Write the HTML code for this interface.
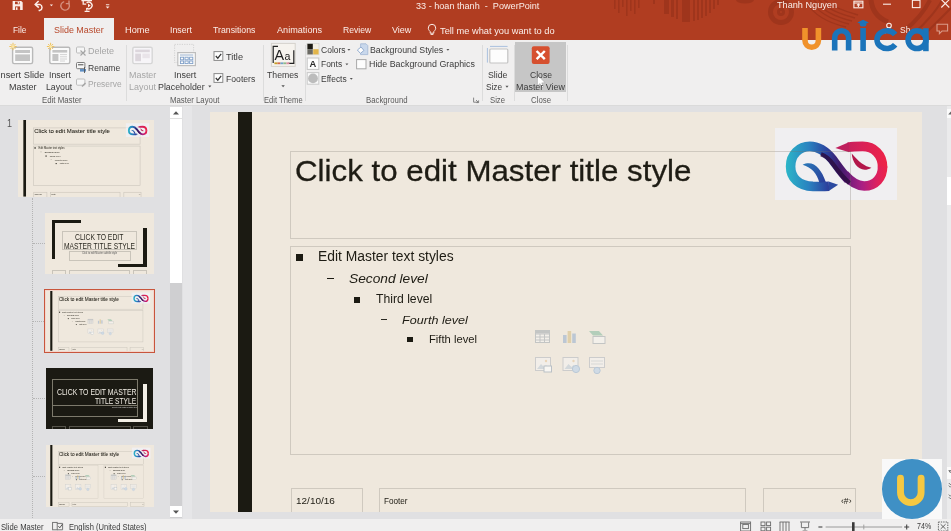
<!DOCTYPE html>
<html lang="en"><head><meta charset="utf-8"><title>33 - hoan thanh - PowerPoint</title>
<style>
html,body{margin:0;padding:0}
body{width:951px;height:531px;overflow:hidden;position:relative;background:#e0e0e2;font-family:"Liberation Sans",sans-serif}
.t{position:absolute;white-space:nowrap;line-height:1;transform-origin:0 0;display:block}
.a{position:absolute}
svg{position:absolute;overflow:visible}
.ph{position:absolute;border:1px solid #cfc9bf;box-sizing:border-box}
.sep{position:absolute;width:1px;top:45px;height:56px;background:#dcdcdc}
.cb{position:absolute;box-sizing:border-box;border:1px solid #8a8a8a;background:#fdfdfd}
.th{position:absolute;overflow:hidden;background:#efe8dd}
.sc{position:absolute;left:0;top:0;width:712.5px;height:401px;transform-origin:0 0}
.dk .ph{border-color:#7d7a6c}
.mini .ph{border-width:3.6px;border-color:#c9c4ba}
#all{position:absolute;left:0;top:0;width:951px;height:531px;overflow:hidden;will-change:transform}
</style></head><body><div id="all">

<svg width="0" height="0" style="left:0;top:0">
<defs>
<linearGradient id="lgA" x1="130" y1="0" x2="540" y2="0" gradientUnits="userSpaceOnUse">
<stop offset="0" stop-color="#2bb6c8"/><stop offset=".35" stop-color="#2a82c0"/><stop offset=".62" stop-color="#2b45a0"/><stop offset=".82" stop-color="#3f1a6a"/><stop offset="1" stop-color="#6d1b7c"/>
</linearGradient>
<linearGradient id="lgB" x1="496" y1="0" x2="765" y2="0" gradientUnits="userSpaceOnUse">
<stop offset="0" stop-color="#651a78"/><stop offset=".4" stop-color="#a81f84"/><stop offset=".75" stop-color="#dc2060"/><stop offset="1" stop-color="#ee2346"/>
</linearGradient>
<linearGradient id="lgC" x1="440" y1="0" x2="765" y2="0" gradientUnits="userSpaceOnUse">
<stop offset="0" stop-color="#b81e5e"/><stop offset=".5" stop-color="#d82058"/><stop offset="1" stop-color="#ee2346"/>
</linearGradient>
<linearGradient id="lgD" x1="235" y1="280" x2="380" y2="390" gradientUnits="userSpaceOnUse">
<stop offset="0" stop-color="#2a78b8"/><stop offset="1" stop-color="#2a3c98"/>
</linearGradient>
</defs>
<symbol id="logo" viewBox="0 0 875 531">
<path d="M735,296 C735,215 680,165 610,165 C570,165 545,166 518,171" fill="none" stroke="url(#lgC)" stroke-width="60"/>
<path d="M524,139 L440,175 L526,201 Z" fill="#bf1f5d"/>
<path d="M496,340 C535,385 570,412 620,412 C690,412 735,360 735,290" fill="none" stroke="url(#lgB)" stroke-width="60"/>
<path d="M400,414 C360,416 330,415 300,415 C210,413 160,360 160,290 C160,215 215,165 280,165 C340,165 385,200 425,250 C455,290 480,330 522,372" fill="none" stroke="url(#lgA)" stroke-width="60"/>
<path d="M398,384 L457,405 L398,444 Z" fill="#2b49a0"/>
<path d="M350,214 C385,225 405,248 425,275 C450,310 480,350 528,394" fill="none" stroke="#2d0d42" stroke-width="27" opacity=".85"/>
<path d="M235,280 C300,248 350,300 380,388 L340,392 C325,335 292,297 235,280Z" fill="url(#lgD)"/>
<path d="M542,210 C546,278 600,338 665,298 C625,294 582,258 542,210Z" fill="#b3174a"/>
</symbol>
</svg>










<!-- ============ TITLE BAR + TABS ============ -->
<div class="a" style="left:0;top:0;width:951px;height:40.8px;background:#b03d21"></div>
<svg width="951" height="40" style="left:0;top:0" viewBox="0 0 951 40">
<g fill="#9f351c">
<rect x="614" y="0" width="1.6" height="9"/><rect x="618" y="0" width="1.6" height="13"/><rect x="622" y="0" width="1.6" height="7"/><rect x="626" y="0" width="1.6" height="16"/><rect x="630" y="0" width="1.6" height="11"/><rect x="634" y="0" width="1.6" height="14"/><rect x="638" y="0" width="1.6" height="8"/>
<rect x="653" y="0" width="2" height="4"/><rect x="664" y="0" width="5" height="14"/><rect x="671" y="0" width="3" height="17"/><rect x="676" y="0" width="2" height="19"/><rect x="682" y="0" width="8" height="22"/><rect x="693" y="0" width="2" height="21"/><rect x="697" y="0" width="2" height="20"/><rect x="701" y="0" width="2" height="18"/><rect x="705" y="0" width="2" height="16"/><rect x="709" y="0" width="2" height="13"/><rect x="713" y="0" width="2" height="9"/><rect x="717" y="0" width="2" height="5"/>
<path d="M736,0 a9,3.5 0 0 0 18,0z"/>
</g>
<g fill="none" stroke="#9f351c">
<circle cx="781" cy="12" r="10.5" stroke-width="5"/><circle cx="781" cy="12" r="2.5" stroke-width="3"/>
<path d="M806,2 C812,12 824,22 846,27 M810,0 C816,10 828,19 849,24 M814,0 C820,8 832,16 852,21 M819,0 C824,6 836,13 855,18 M824,0 C829,4 840,10 858,15" stroke-width="1.3"/>
<path d="M871,0 C872,10 878,18 888,22" stroke-width="5"/>
<path d="M905,30 C915,22 925,10 930,0" stroke-width="4"/><path d="M913,34 C925,24 937,10 942,0" stroke-width="2"/><path d="M921,38 L951,8" stroke-width="2"/>
</g>
</svg>
<div class="a" style="left:44.1px;top:18.2px;width:70px;height:23px;background:#f0efef"></div>


<!-- quick access toolbar -->
<svg width="120" height="14" viewBox="0 0 120 14" style="left:0;top:0">
<g fill="#fbeee9">
<path d="M12.6,1 h8.6 l1.5,1.5 v7.4 h-10.1z"/>
</g>
<rect x="15" y="1.6" width="4.6" height="2.6" fill="#b03d21"/><rect x="17.7" y="1.6" width="1.3" height="2.1" fill="#fbeee9"/>
<rect x="15.1" y="6.4" width="5" height="3.5" fill="#b03d21"/><rect x="16" y="7.3" width="1.5" height="2.6" fill="#fbeee9"/>
<g fill="none" stroke="#fbeee9" stroke-width="1.5">
<path d="M38.6,1 L35.2,4.4 L38.8,7.6"/><path d="M35.6,4.4 h4.2 a3.4,3.2 0 0 1 0,6 l-1.2,0.2" />
</g>
<path d="M49.8,4.4 h3.2 l-1.6,1.8z" fill="#fbeee9"/>
<g fill="none" stroke="#d58f7d" stroke-width="1.4">
<path d="M68.4,3 A4.3,4.3 0 1 1 64.2,1.6"/><path d="M69,0.4 v3.2 h-3.2"/>
</g>
<g fill="none" stroke="#fbeee9" stroke-width="1.3">
<path d="M81.4,0.6 h10.6"/><path d="M83.2,1 v3.2 h3"/><path d="M86.6,3 a3.3,3.3 0 1 1 0,5"/><path d="M86.8,8 v2.4 M84.6,11.3 h5"/>
</g>
<path d="M88,3.6 l2.6,1.9 -2.6,1.9z" fill="#fbeee9"/>
<path d="M105.7,6.6 h3.8 l-1.9,2z" fill="#fbeee9"/><rect x="105.9" y="4.3" width="3.4" height=".9" fill="#fbeee9"/>
</svg>
<!-- window controls -->
<svg width="110" height="12" viewBox="845 0 110 12" style="left:845px;top:0">
<g fill="none" stroke="#fbeee9" stroke-width="1.1">
<rect x="853.9" y="1.2" width="9" height="6.6"/><path d="M853.9,3 h9"/><path d="M858.4,4 v3 M856.9,5.3 l1.5,-1.4 1.5,1.4"/>
<path d="M883,4.2 h8"/>
<rect x="912.4" y="0.3" width="7.6" height="7.3"/>
<path d="M941.3,-0.5 l8,8 M949.3,-0.5 l-8,8"/>
</g>
</svg>
<!-- tell me bulb, share, comment -->
<svg width="30" height="16" viewBox="425 22 30 16" style="left:425px;top:22px">
<g fill="none" stroke="#fbeee9" stroke-width="1">
<path d="M430.2,31.6 c-1.6,-1.6 -1.9,-2.6 -1.9,-3.6 a3.7,3.7 0 0 1 7.4,0 c0,1 -.3,2 -1.9,3.6 v1.6 h-3.6z"/><path d="M430.6,34.4 h2.8"/>
</g></svg>
<svg width="70" height="16" viewBox="885 20 70 16" style="left:885px;top:20px">
<g fill="none" stroke="#fbeee9" stroke-width="1.1">
<circle cx="889" cy="25.6" r="2.3"/><path d="M885,33.5 a4,4.4 0 0 1 8,0"/>
<path d="M937,24.2 h10.6 v6.8 h-5.6 l-2.6,2.6 v-2.6 h-2.4z" stroke="#d99a88"/>
</g></svg>

<!-- ============ RIBBON ============ -->
<div class="a" style="left:0;top:40px;width:951px;height:65px;background:#f0efef"></div>
<div class="a" style="left:0;top:104.5px;width:951px;height:1px;background:#dadada"></div>
<div class="sep" style="left:126px"></div>
<div class="sep" style="left:262.5px"></div>
<div class="sep" style="left:304.5px"></div>
<div class="sep" style="left:482px"></div>
<div class="sep" style="left:513.8px"></div>
<div class="sep" style="left:567px"></div>
<div class="a" style="left:515.2px;top:42px;width:51px;height:50px;background:#c6c6c6"></div>


<!-- ribbon icons -->
<svg width="600" height="65" viewBox="0 40 600 65" style="left:0;top:40px">
<!-- insert slide master -->
<rect x="12.6" y="47.2" width="20" height="16.4" rx="1.5" fill="#fafafa" stroke="#b9b9b9" stroke-width="1.4"/>
<rect x="15.2" y="50" width="14.8" height="3" fill="#c4c4c4"/><rect x="15.2" y="54.4" width="14.8" height="6.6" fill="#c4c4c4"/>
<g stroke="#efbe4e" stroke-width=".9" fill="none"><path d="M13.0,42.8 v7.4 M9.3,46.5 h7.4 M10.5,44.0 l5,5 M15.5,44.0 l-5,5"/></g><circle cx="13.0" cy="46.5" r="1.5" fill="#fbe6a8"/>
<!-- insert layout -->
<rect x="49.8" y="47.2" width="20" height="16.4" rx="1.5" fill="#fafafa" stroke="#b9b9b9" stroke-width="1.4"/>
<rect x="52.4" y="50" width="14.8" height="2.6" fill="#c4c4c4"/><rect x="52.4" y="54" width="6" height="7" fill="#c4c4c4"/>
<path d="M60,54.6 h7 M60,56.8 h7 M60,59 h7 M60,61 h5" stroke="#cfcfcf" stroke-width=".9"/>
<g stroke="#efbe4e" stroke-width=".9" fill="none"><path d="M50.6,42.8 v7.4 M46.9,46.5 h7.4 M48.1,44.0 l5,5 M53.1,44.0 l-5,5"/></g><circle cx="50.6" cy="46.5" r="1.5" fill="#fbe6a8"/>
<!-- delete / rename / preserve small icons -->
<g fill="#f6f6f6" stroke="#bdbdbd" stroke-width="1"><rect x="76.5" y="47" width="8" height="6" rx="1"/></g>
<path d="M80.5,50.5 l5,5 M85.5,50.5 l-5,5" stroke="#a5a5a5" stroke-width="1.1"/>
<g fill="#f6f6f6" stroke="#7d7d7d" stroke-width="1"><rect x="76.5" y="62.5" width="8.4" height="6.2" rx="1"/></g>
<rect x="78" y="64" width="5.4" height="1.4" fill="#7d7d7d"/><rect x="80" y="69" width="6" height="2.6" fill="#5f8fc4"/><path d="M84.5,67 v6" stroke="#555" stroke-width=".9"/>
<g fill="#f6f6f6" stroke="#bdbdbd" stroke-width="1"><rect x="76.5" y="79" width="8.4" height="6.2" rx="1"/></g>
<path d="M82,86.5 l3.5,-3.5" stroke="#a5a5a5" stroke-width="1.5"/>
<!-- master layout (disabled) -->
<rect x="132.8" y="47.2" width="19.4" height="16.4" rx="1.5" fill="#f7f5f8" stroke="#d6d6d6" stroke-width="1.4"/>
<rect x="135.2" y="49.6" width="14.6" height="2.6" fill="#dcd6dc"/><rect x="135.2" y="53.6" width="5.8" height="7.6" fill="#dcd6dc"/><rect x="142.4" y="53.6" width="7.4" height="4.6" fill="#e9e4e9"/>
<!-- insert placeholder -->
<rect x="174.6" y="44.4" width="19" height="18" fill="none" stroke="#c9c9c9" stroke-width=".8" stroke-dasharray="1.2,1.2"/>
<rect x="177.8" y="52.6" width="17.6" height="13" fill="#fbfbfb" stroke="#bdbdbd" stroke-width="1.2"/>
<path d="M180,55 h13.2" stroke="#9eb4d0" stroke-width="1"/>
<g fill="none" stroke="#7f9fc8" stroke-width=".9"><rect x="180.4" y="57.2" width="3.2" height="2.6"/><rect x="185" y="57.2" width="3.2" height="2.6"/><rect x="189.6" y="57.2" width="3.2" height="2.6"/><rect x="180.4" y="61" width="3.2" height="2.6"/><rect x="185" y="61" width="3.2" height="2.6"/><rect x="189.6" y="61" width="3.2" height="2.6"/></g>
<path d="M208.2,85.6 h3.2 l-1.6,1.9z" fill="#555"/>
<!-- checkboxes -->
<rect x="214" y="51.6" width="8.8" height="8.8" fill="#fdfdfd" stroke="#8a8a8a" stroke-width="1"/><path d="M215.8,56 l2,2.2 3.4,-4.4" fill="none" stroke="#333" stroke-width="1.2"/>
<rect x="214" y="73.6" width="8.8" height="8.8" fill="#fdfdfd" stroke="#8a8a8a" stroke-width="1"/><path d="M215.8,78 l2,2.2 3.4,-4.4" fill="none" stroke="#333" stroke-width="1.2"/>
<!-- themes -->
<rect x="271.4" y="43.4" width="23.8" height="23" fill="#f6f3ee" stroke="#d5d2cc" stroke-width="1"/>
<path d="M278,46.4 h-4.8 v16.6 M293.8,50.2 v13.2 h-5.6" fill="none" stroke="#222" stroke-width="1.2"/>
<text x="274.6" y="59.6" font-family="Liberation Sans, sans-serif" font-size="14.4" fill="#1e1e1e">A</text><text x="284.4" y="59.6" font-family="Liberation Sans, sans-serif" font-size="10.6" fill="#1e1e1e">a</text>
<g><rect x="274.4" y="62.4" width="3" height="1.8" fill="#c9a227"/><rect x="277.4" y="62.4" width="3" height="1.8" fill="#d46a4a"/><rect x="280.4" y="62.4" width="3" height="1.8" fill="#6fa0c8"/><rect x="283.4" y="62.4" width="3" height="1.8" fill="#8fb98a"/><rect x="286.4" y="62.4" width="3" height="1.8" fill="#d98aa0"/></g>
<path d="M281.4,85.2 h3.4 l-1.7,2z" fill="#555"/>
<!-- colors / fonts / effects -->
<rect x="307" y="43.4" width="12" height="11.4" fill="#f4f0e6" stroke="#cfcfcf" stroke-width=".6"/>
<rect x="307.4" y="43.8" width="5.4" height="5.4" fill="#1c1a14"/><rect x="307.4" y="49.2" width="5.4" height="5.2" fill="#6b6a64"/><rect x="313.2" y="49.2" width="5.4" height="5.2" fill="#e2b54a"/>
<rect x="307.2" y="58" width="11.6" height="11.4" fill="#fdfdfd" stroke="#c4c4c4" stroke-width="1"/>
<text x="309.6" y="67.4" font-family="Liberation Sans, sans-serif" font-size="9.4" font-weight="bold" fill="#2b2b2b">A</text>
<rect x="307.2" y="72.6" width="11.6" height="11.6" fill="#f9f9f9" stroke="#c9c9c9" stroke-width="1"/><circle cx="313" cy="78.4" r="4.9" fill="#bcbcbc"/>
<path d="M347.4,49 h3 l-1.5,1.8z M345.4,63.4 h3 l-1.5,1.8z M349.8,78 h3 l-1.5,1.8z M446.4,49 h3 l-1.5,1.8z" fill="#555"/>
<!-- background styles -->
<path d="M360.6,43.8 h5.4 l1.8,1.8 v9 h-7.2z" fill="#c9d8ec" stroke="#9fb6d4" stroke-width=".8"/>
<path d="M357.4,50 l3.6,-3 3,3.4 -3.6,3z" fill="#fdfdfd" stroke="#8aa6cc" stroke-width=".9"/>
<rect x="356.6" y="59.6" width="9.4" height="9.2" fill="#fdfdfd" stroke="#a9a9a9" stroke-width="1"/>
<path d="M473.6,97.6 v4.6 h4.6 M476,100 l2.4,2.4 M478.6,100.4 v2.2 h-2.2" fill="none" stroke="#7a7a7a" stroke-width=".9"/>
<!-- slide size -->
<path d="M487.4,48 v14.6 M490,46.4 h17.6" stroke="#a9c0de" stroke-width="1"/>
<rect x="489.8" y="49" width="18" height="14" rx="1" fill="#fdfdfd" stroke="#c4c4c4" stroke-width="1.2"/>
<path d="M505.4,85.8 h3.2 l-1.6,1.9z" fill="#555"/>
<!-- close master view -->
<rect x="531.8" y="46.2" width="17.8" height="17.8" rx="2" fill="#d6502f"/>
<path d="M536.6,51 l8.2,8.2 M544.8,51 l-8.2,8.2" stroke="#fff" stroke-width="2.4"/>
<!-- mouse cursor -->
<path d="M537.4,75 v11 l2.6,-2.4 1.8,4 1.8,-.8 -1.8,-3.9 3.4,-.2z" fill="#fff" stroke="#999" stroke-width=".5"/>
</svg>


<!-- ============ LEFT PANE ============ -->
<div class="a" style="left:183px;top:105.5px;width:8.5px;height:413px;background:#e6e6e8"></div>
<div class="a" style="left:32px;top:198px;width:0;height:320px;border-left:1px dotted #b4b4b4"></div>
<div class="a" style="left:33px;top:242.5px;width:12px;height:0;border-top:1px dotted #b4b4b4"></div>
<div class="a" style="left:33px;top:320.5px;width:11px;height:0;border-top:1px dotted #b4b4b4"></div>
<div class="a" style="left:33px;top:398px;width:12px;height:0;border-top:1px dotted #b4b4b4"></div>
<div class="a" style="left:33px;top:475.5px;width:12px;height:0;border-top:1px dotted #b4b4b4"></div>

<!-- thumb 1 : master -->
<div class="th" style="left:18px;top:120px;width:136px;height:77.4px">
<div class="sc mini" style="transform:scale(.1909)">
<div class="a" style="left:28px;top:0;width:14.1px;height:401px;background:#1b1a12"></div>
<div class="ph" style="left:80.2px;top:40.4px;width:561px;height:87.3px"></div>
<div class="a" style="left:564.6px;top:17.3px;width:122.9px;height:71.4px;background:#f0eff1"></div>
<div class="a" style="left:555px;top:9px;width:140px;height:85px"><svg width="140" height="85" viewBox="0 0 875 531" style="left:0;top:0"><use href="#logo"/></svg></div>
<div class="a" style="left:564.6px;top:40.4px;width:76px;height:1px;background:rgba(120,110,100,.28)"></div>
<div class="a" style="left:640.2px;top:40.4px;width:1px;height:48.3px;background:rgba(120,110,100,.28)"></div>
<div class="ph" style="left:80.7px;top:377.3px;width:72.2px;height:30px"></div>
<div class="ph" style="left:169px;top:377.3px;width:366.8px;height:30px"></div>
<div class="ph" style="left:553.3px;top:377.3px;width:93.2px;height:30px"></div>
<div class="ph" style="left:80.2px;top:134.5px;width:561px;height:209px"></div>
<div class="a" style="left:86.3px;top:142.8px;width:7.2px;height:7px;background:#1b1a12"></div>
<div class="a" style="left:117.4px;top:167.1px;width:6.3px;height:1.2px;background:#1b1a12"></div>
<div class="a" style="left:143.7px;top:186px;width:6.6px;height:6.4px;background:#1b1a12"></div>
<div class="a" style="left:170.9px;top:208.2px;width:5.8px;height:1.1px;background:#2b2a22"></div>
<div class="a" style="left:197.3px;top:225.8px;width:5.7px;height:5.6px;background:#1b1a12"></div>
<span class="t" style="left:85.20px;top:45.44px;font-size:30.20px;color:#1e1c14;-webkit-text-stroke:.3px #1e1c14;transform:scaleX(1.0363);">Click to edit Master title style</span>
<span class="t" style="left:86.40px;top:386.09px;font-size:8.40px;color:#1e1c14;transform:scaleX(1.1929);">12/10/16</span>
<span class="t" style="left:174.40px;top:386.09px;font-size:8.40px;color:#1e1c14;transform:scaleX(0.9745);">Footer</span>
<span class="t" style="left:631.50px;top:386.09px;font-size:8.40px;color:#1e1c14;transform:scaleX(1.0244);">‹#›</span>
<span class="t" style="left:108.40px;top:138.52px;font-size:13.80px;color:#1e1c14;transform:scaleX(1.0048);">Edit Master text styles</span>
<span class="t" style="left:138.90px;top:161.13px;font-size:13.20px;color:#1e1c14;font-style:italic;transform:scaleX(1.0435);">Second level</span>
<span class="t" style="left:166.20px;top:181.80px;font-size:12.40px;color:#1e1c14;transform:scaleX(0.9833);">Third level</span>
<span class="t" style="left:192.50px;top:203.00px;font-size:11.70px;color:#1e1c14;font-style:italic;transform:scaleX(1.0773);">Fourth level</span>
<span class="t" style="left:219.20px;top:222.52px;font-size:11.20px;color:#1e1c14;transform:scaleX(1.0026);">Fifth level</span>
</div></div>

<!-- thumb 2 : title layout -->
<div class="th" style="left:45px;top:213px;width:108.5px;height:61px">
<div class="a" style="left:7.3px;top:7px;width:3.2px;height:39px;background:#1b1a12"></div>
<div class="a" style="left:7.3px;top:7px;width:28.7px;height:3px;background:#1b1a12"></div>
<div class="a" style="left:98px;top:15.4px;width:3.5px;height:38.6px;background:#1b1a12"></div>
<div class="a" style="left:73px;top:51px;width:28.5px;height:3px;background:#1b1a12"></div>
<div class="ph" style="left:17.3px;top:18.4px;width:74.7px;height:19px;border-width:.7px;border-color:#c9c4ba"></div>
<div class="ph" style="left:24px;top:38px;width:62px;height:10px;border-width:.7px;border-color:#c9c4ba"></div>
<div class="ph" style="left:7.4px;top:57.4px;width:13.6px;height:6px;border-width:.7px;border-color:#c9c4ba"></div>
<div class="ph" style="left:23.6px;top:57.4px;width:61.6px;height:6px;border-width:.7px;border-color:#c9c4ba"></div>
<div class="ph" style="left:87.6px;top:57.4px;width:14.8px;height:6px;border-width:.7px;border-color:#c9c4ba"></div>
<span class="t" style="left:30.00px;top:20.09px;font-size:8.30px;color:#2a2820;transform:scaleX(0.8163);">CLICK TO EDIT</span>
<span class="t" style="left:19.00px;top:28.79px;font-size:8.30px;color:#2a2820;transform:scaleX(0.8064);">MASTER TITLE STYLE</span>
<span class="t" style="left:37.00px;top:40.44px;font-size:2.60px;color:#555;transform:scaleX(0.9447);">Click to edit Master subtitle style</span>
</div>

<!-- thumb 3 : title and content (selected) -->
<div class="th" style="left:45.6px;top:290.4px;width:108px;height:61px">
<div class="sc mini" style="transform:scale(.1516)">
<div class="a" style="left:28px;top:0;width:14.1px;height:401px;background:#1b1a12"></div>
<div class="ph" style="left:80.2px;top:40.4px;width:561px;height:87.3px"></div>
<div class="a" style="left:564.6px;top:17.3px;width:122.9px;height:71.4px;background:#f0eff1"></div>
<div class="a" style="left:555px;top:9px;width:140px;height:85px"><svg width="140" height="85" viewBox="0 0 875 531" style="left:0;top:0"><use href="#logo"/></svg></div>
<div class="a" style="left:564.6px;top:40.4px;width:76px;height:1px;background:rgba(120,110,100,.28)"></div>
<div class="a" style="left:640.2px;top:40.4px;width:1px;height:48.3px;background:rgba(120,110,100,.28)"></div>
<div class="ph" style="left:80.7px;top:377.3px;width:72.2px;height:30px"></div>
<div class="ph" style="left:169px;top:377.3px;width:366.8px;height:30px"></div>
<div class="ph" style="left:553.3px;top:377.3px;width:93.2px;height:30px"></div>
<div class="ph" style="left:80.2px;top:134.5px;width:561px;height:209px"></div>
<div class="a" style="left:86.3px;top:142.8px;width:7.2px;height:7px;background:#1b1a12"></div>
<div class="a" style="left:117.4px;top:167.1px;width:6.3px;height:1.2px;background:#1b1a12"></div>
<div class="a" style="left:143.7px;top:186px;width:6.6px;height:6.4px;background:#1b1a12"></div>
<div class="a" style="left:170.9px;top:208.2px;width:5.8px;height:1.1px;background:#2b2a22"></div>
<div class="a" style="left:197.3px;top:225.8px;width:5.7px;height:5.6px;background:#1b1a12"></div>
<span class="t" style="left:85.20px;top:45.44px;font-size:30.20px;color:#1e1c14;-webkit-text-stroke:.3px #1e1c14;transform:scaleX(1.0363);">Click to edit Master title style</span>
<span class="t" style="left:86.40px;top:386.09px;font-size:8.40px;color:#1e1c14;transform:scaleX(1.1929);">12/10/16</span>
<span class="t" style="left:174.40px;top:386.09px;font-size:8.40px;color:#1e1c14;transform:scaleX(0.9745);">Footer</span>
<span class="t" style="left:631.50px;top:386.09px;font-size:8.40px;color:#1e1c14;transform:scaleX(1.0244);">‹#›</span>
<span class="t" style="left:108.40px;top:138.52px;font-size:13.80px;color:#1e1c14;transform:scaleX(1.0048);">Edit Master text styles</span>
<span class="t" style="left:138.90px;top:161.13px;font-size:13.20px;color:#1e1c14;font-style:italic;transform:scaleX(1.0435);">Second level</span>
<span class="t" style="left:166.20px;top:181.80px;font-size:12.40px;color:#1e1c14;transform:scaleX(0.9833);">Third level</span>
<span class="t" style="left:192.50px;top:203.00px;font-size:11.70px;color:#1e1c14;font-style:italic;transform:scaleX(1.0773);">Fourth level</span>
<span class="t" style="left:219.20px;top:222.52px;font-size:11.20px;color:#1e1c14;transform:scaleX(1.0026);">Fifth level</span>
<div class="a" style="left:0;top:0;width:712.5px;height:401px;transform:scale(2.4);transform-origin:360.5px 239px"><svg width="75" height="46" viewBox="0 0 75 46" style="left:323.4px;top:216.6px;opacity:.62">
<g fill="none" stroke="#a9b0b6" stroke-width="1">
<rect x="2.5" y="2.5" width="14" height="12" fill="#f7f6f3"/><path d="M2.5,6 h14 M2.5,9 h14 M2.5,12 h14 M7,6 v8.5 M11.5,6 v8.5"/>
</g>
<rect x="2.5" y="2.5" width="14" height="3" fill="#a9b0b6"/>
<rect x="30" y="7" width="3.6" height="8" fill="#9db3cf"/><rect x="34.6" y="3" width="3.6" height="12" fill="#d8c08a"/><rect x="39.2" y="5.5" width="3.6" height="9.5" fill="#9db3cf"/>
<path d="M56,3 h10 l4,4.5 h-10z" fill="#8fbfa5"/><rect x="60" y="8.5" width="12" height="7" fill="#f7f6f3" stroke="#a9b0b6"/>
<g fill="#f4f3f1" stroke="#b7bcc2" stroke-width="1">
<rect x="2.5" y="29.5" width="15" height="13"/><rect x="30" y="29.5" width="15" height="13"/><rect x="56.5" y="29.5" width="15" height="10"/>
</g>
<path d="M4,41 l4,-5 3,3 2,-2 3,4z" fill="#c3cfdb"/><circle cx="13" cy="33" r="1.2" fill="#e7c9a0"/>
<path d="M31.5,41 l4,-5 3,3 2,-2 3,4z" fill="#c3cfdb"/><circle cx="40.5" cy="33" r="1.2" fill="#e7c9a0"/>
<rect x="11" y="38" width="7.5" height="6" fill="#fff" stroke="#9aa9b8"/>
<circle cx="43" cy="41" r="3.6" fill="#bcd3ea" stroke="#9ab5d2"/>
<path d="M58,33 h12 M58,36 h12" stroke="#c9cdd2"/><circle cx="64" cy="42.5" r="3.2" fill="#bcd3ea" stroke="#9ab5d2"/>
</svg></div>
</div></div>
<div class="a" style="left:44.2px;top:289px;width:110.8px;height:64px;box-sizing:border-box;border:1.4px solid #c8553c;box-shadow:inset 0 0 0 1px #f3d6cc"></div>

<!-- thumb 4 : dark section header -->
<div class="th dk" style="left:45.6px;top:368.4px;width:107.6px;height:60.6px;background:#1b1a13">
<div class="a" style="left:97.4px;top:15.2px;width:3.6px;height:38.8px;background:#f3efe6"></div>
<div class="a" style="left:72px;top:50.6px;width:29px;height:3.4px;background:#f3efe6"></div>
<div class="ph" style="left:6.8px;top:11px;width:85.6px;height:26.6px;border-width:.6px"></div>
<div class="ph" style="left:6.8px;top:37px;width:85.6px;height:11.2px;border-width:.6px"></div>
<div class="ph" style="left:6.8px;top:57.4px;width:14px;height:6px;border-width:.6px;border-color:#55534a"></div>
<div class="ph" style="left:23.2px;top:57.4px;width:62px;height:6px;border-width:.6px;border-color:#55534a"></div>
<div class="ph" style="left:87.4px;top:57.4px;width:15px;height:6px;border-width:.6px;border-color:#55534a"></div>
<span class="t" style="left:11.30px;top:19.22px;font-size:8.70px;color:#f3efe6;transform:scaleX(0.7917);">CLICK TO EDIT MASTER</span>
<span class="t" style="left:49.60px;top:28.52px;font-size:8.70px;color:#f3efe6;transform:scaleX(0.7687);">TITLE STYLE</span>
<span class="t" style="left:66.00px;top:38.73px;font-size:2.40px;color:#ddd;transform:scaleX(0.7319);">Click to edit Master subtitle style</span>
</div>

<!-- thumb 5 : two content -->
<div class="th" style="left:45.6px;top:445px;width:108.4px;height:62px">
<div class="sc mini" style="transform:scale(.1521)">
<div class="a" style="left:28px;top:0;width:14.1px;height:401px;background:#1b1a12"></div>
<div class="ph" style="left:80.2px;top:40.4px;width:561px;height:87.3px"></div>
<div class="a" style="left:564.6px;top:17.3px;width:122.9px;height:71.4px;background:#f0eff1"></div>
<div class="a" style="left:555px;top:9px;width:140px;height:85px"><svg width="140" height="85" viewBox="0 0 875 531" style="left:0;top:0"><use href="#logo"/></svg></div>
<div class="a" style="left:564.6px;top:40.4px;width:76px;height:1px;background:rgba(120,110,100,.28)"></div>
<div class="a" style="left:640.2px;top:40.4px;width:1px;height:48.3px;background:rgba(120,110,100,.28)"></div>
<div class="ph" style="left:80.7px;top:377.3px;width:72.2px;height:30px"></div>
<div class="ph" style="left:169px;top:377.3px;width:366.8px;height:30px"></div>
<div class="ph" style="left:553.3px;top:377.3px;width:93.2px;height:30px"></div>
<div class="ph" style="left:79px;top:136px;width:264px;height:216px;border-width:2px"></div>
<div class="ph" style="left:380px;top:136px;width:262px;height:216px;border-width:2px"></div>
<span class="t" style="left:85.20px;top:45.44px;font-size:30.20px;color:#1e1c14;-webkit-text-stroke:.3px #1e1c14;transform:scaleX(1.0363);">Click to edit Master title style</span>
<span class="t" style="left:86.40px;top:386.09px;font-size:8.40px;color:#1e1c14;transform:scaleX(1.1929);">12/10/16</span>
<span class="t" style="left:174.40px;top:386.09px;font-size:8.40px;color:#1e1c14;transform:scaleX(0.9745);">Footer</span>
<span class="t" style="left:631.50px;top:386.09px;font-size:8.40px;color:#1e1c14;transform:scaleX(1.0244);">‹#›</span>
<div class="a" style="left:0;top:0;width:343px;height:352px;overflow:hidden"><div class="a" style="left:86.3px;top:142.8px;width:7.2px;height:7px;background:#1b1a12"></div>
<div class="a" style="left:117.4px;top:167.1px;width:6.3px;height:1.2px;background:#1b1a12"></div>
<div class="a" style="left:143.7px;top:186px;width:6.6px;height:6.4px;background:#1b1a12"></div>
<div class="a" style="left:170.9px;top:208.2px;width:5.8px;height:1.1px;background:#2b2a22"></div>
<div class="a" style="left:197.3px;top:225.8px;width:5.7px;height:5.6px;background:#1b1a12"></div><span class="t" style="left:108.40px;top:138.52px;font-size:13.80px;color:#1e1c14;transform:scaleX(1.0048);">Edit Master text styles</span>
<span class="t" style="left:138.90px;top:161.13px;font-size:13.20px;color:#1e1c14;font-style:italic;transform:scaleX(1.0435);">Second level</span>
<span class="t" style="left:166.20px;top:181.80px;font-size:12.40px;color:#1e1c14;transform:scaleX(0.9833);">Third level</span>
<span class="t" style="left:192.50px;top:203.00px;font-size:11.70px;color:#1e1c14;font-style:italic;transform:scaleX(1.0773);">Fourth level</span>
<span class="t" style="left:219.20px;top:222.52px;font-size:11.20px;color:#1e1c14;transform:scaleX(1.0026);">Fifth level</span></div>
<div class="a" style="left:301px;top:0;width:341px;height:352px;overflow:hidden"><div class="a" style="left:86.3px;top:142.8px;width:7.2px;height:7px;background:#1b1a12"></div>
<div class="a" style="left:117.4px;top:167.1px;width:6.3px;height:1.2px;background:#1b1a12"></div>
<div class="a" style="left:143.7px;top:186px;width:6.6px;height:6.4px;background:#1b1a12"></div>
<div class="a" style="left:170.9px;top:208.2px;width:5.8px;height:1.1px;background:#2b2a22"></div>
<div class="a" style="left:197.3px;top:225.8px;width:5.7px;height:5.6px;background:#1b1a12"></div><span class="t" style="left:108.40px;top:138.52px;font-size:13.80px;color:#1e1c14;transform:scaleX(1.0048);">Edit Master text styles</span>
<span class="t" style="left:138.90px;top:161.13px;font-size:13.20px;color:#1e1c14;font-style:italic;transform:scaleX(1.0435);">Second level</span>
<span class="t" style="left:166.20px;top:181.80px;font-size:12.40px;color:#1e1c14;transform:scaleX(0.9833);">Third level</span>
<span class="t" style="left:192.50px;top:203.00px;font-size:11.70px;color:#1e1c14;font-style:italic;transform:scaleX(1.0773);">Fourth level</span>
<span class="t" style="left:219.20px;top:222.52px;font-size:11.20px;color:#1e1c14;transform:scaleX(1.0026);">Fifth level</span></div>
<div class="a" style="left:-149.5px;top:4px;width:712.5px;height:401px;transform:scale(2.4);transform-origin:360.5px 239px"><svg width="75" height="46" viewBox="0 0 75 46" style="left:323.4px;top:216.6px;opacity:.62">
<g fill="none" stroke="#a9b0b6" stroke-width="1">
<rect x="2.5" y="2.5" width="14" height="12" fill="#f7f6f3"/><path d="M2.5,6 h14 M2.5,9 h14 M2.5,12 h14 M7,6 v8.5 M11.5,6 v8.5"/>
</g>
<rect x="2.5" y="2.5" width="14" height="3" fill="#a9b0b6"/>
<rect x="30" y="7" width="3.6" height="8" fill="#9db3cf"/><rect x="34.6" y="3" width="3.6" height="12" fill="#d8c08a"/><rect x="39.2" y="5.5" width="3.6" height="9.5" fill="#9db3cf"/>
<path d="M56,3 h10 l4,4.5 h-10z" fill="#8fbfa5"/><rect x="60" y="8.5" width="12" height="7" fill="#f7f6f3" stroke="#a9b0b6"/>
<g fill="#f4f3f1" stroke="#b7bcc2" stroke-width="1">
<rect x="2.5" y="29.5" width="15" height="13"/><rect x="30" y="29.5" width="15" height="13"/><rect x="56.5" y="29.5" width="15" height="10"/>
</g>
<path d="M4,41 l4,-5 3,3 2,-2 3,4z" fill="#c3cfdb"/><circle cx="13" cy="33" r="1.2" fill="#e7c9a0"/>
<path d="M31.5,41 l4,-5 3,3 2,-2 3,4z" fill="#c3cfdb"/><circle cx="40.5" cy="33" r="1.2" fill="#e7c9a0"/>
<rect x="11" y="38" width="7.5" height="6" fill="#fff" stroke="#9aa9b8"/>
<circle cx="43" cy="41" r="3.6" fill="#bcd3ea" stroke="#9ab5d2"/>
<path d="M58,33 h12 M58,36 h12" stroke="#c9cdd2"/><circle cx="64" cy="42.5" r="3.2" fill="#bcd3ea" stroke="#9ab5d2"/>
</svg></div>
<div class="a" style="left:150.5px;top:4px;width:712.5px;height:401px;transform:scale(2.4);transform-origin:360.5px 239px"><svg width="75" height="46" viewBox="0 0 75 46" style="left:323.4px;top:216.6px;opacity:.62">
<g fill="none" stroke="#a9b0b6" stroke-width="1">
<rect x="2.5" y="2.5" width="14" height="12" fill="#f7f6f3"/><path d="M2.5,6 h14 M2.5,9 h14 M2.5,12 h14 M7,6 v8.5 M11.5,6 v8.5"/>
</g>
<rect x="2.5" y="2.5" width="14" height="3" fill="#a9b0b6"/>
<rect x="30" y="7" width="3.6" height="8" fill="#9db3cf"/><rect x="34.6" y="3" width="3.6" height="12" fill="#d8c08a"/><rect x="39.2" y="5.5" width="3.6" height="9.5" fill="#9db3cf"/>
<path d="M56,3 h10 l4,4.5 h-10z" fill="#8fbfa5"/><rect x="60" y="8.5" width="12" height="7" fill="#f7f6f3" stroke="#a9b0b6"/>
<g fill="#f4f3f1" stroke="#b7bcc2" stroke-width="1">
<rect x="2.5" y="29.5" width="15" height="13"/><rect x="30" y="29.5" width="15" height="13"/><rect x="56.5" y="29.5" width="15" height="10"/>
</g>
<path d="M4,41 l4,-5 3,3 2,-2 3,4z" fill="#c3cfdb"/><circle cx="13" cy="33" r="1.2" fill="#e7c9a0"/>
<path d="M31.5,41 l4,-5 3,3 2,-2 3,4z" fill="#c3cfdb"/><circle cx="40.5" cy="33" r="1.2" fill="#e7c9a0"/>
<rect x="11" y="38" width="7.5" height="6" fill="#fff" stroke="#9aa9b8"/>
<circle cx="43" cy="41" r="3.6" fill="#bcd3ea" stroke="#9ab5d2"/>
<path d="M58,33 h12 M58,36 h12" stroke="#c9cdd2"/><circle cx="64" cy="42.5" r="3.2" fill="#bcd3ea" stroke="#9ab5d2"/>
</svg></div>
</div></div>


<!-- scrollbar -->
<div class="a" style="left:170px;top:106.5px;width:12px;height:411px;background:#cfcfd1"></div>
<div class="a" style="left:170px;top:106.5px;width:12px;height:176.5px;background:#fff"></div>
<div class="a" style="left:170px;top:117.8px;width:12px;height:1px;background:#e0e0e0"></div>
<div class="a" style="left:170px;top:505.6px;width:12px;height:11.6px;background:#fff"></div>
<svg width="12" height="12" style="left:170px;top:106.5px" viewBox="0 0 12 12"><path d="M3,7.5 L6,4.3 L9,7.5Z" fill="#555"/></svg>
<svg width="12" height="12" style="left:170px;top:505.6px" viewBox="0 0 12 12"><path d="M3,4.5 L6,7.7 L9,4.5Z" fill="#555"/></svg>

<!-- ============ MAIN SLIDE ============ -->
<div class="th" id="slide" style="left:209.6px;top:111.8px;width:712.7px;height:400.2px">
<div class="sc" style="left:.4px;top:-.8px">
<div class="a" style="left:28px;top:0;width:14.1px;height:401px;background:#1b1a12"></div>
<div class="ph" style="left:80.2px;top:40.4px;width:561px;height:87.3px"></div>
<div class="a" style="left:564.6px;top:17.3px;width:122.9px;height:71.4px;background:#f0eff1"></div>
<div class="a" style="left:555px;top:9px;width:140px;height:85px"><svg width="140" height="85" viewBox="0 0 875 531" style="left:0;top:0"><use href="#logo"/></svg></div>
<div class="a" style="left:564.6px;top:40.4px;width:76px;height:1px;background:rgba(120,110,100,.28)"></div>
<div class="a" style="left:640.2px;top:40.4px;width:1px;height:48.3px;background:rgba(120,110,100,.28)"></div>
<div class="ph" style="left:80.7px;top:377.3px;width:72.2px;height:30px"></div>
<div class="ph" style="left:169px;top:377.3px;width:366.8px;height:30px"></div>
<div class="ph" style="left:553.3px;top:377.3px;width:93.2px;height:30px"></div>
<div class="ph" style="left:80.2px;top:134.5px;width:561px;height:209px"></div>
<div class="a" style="left:86.3px;top:142.8px;width:7.2px;height:7px;background:#1b1a12"></div>
<div class="a" style="left:117.4px;top:167.1px;width:6.3px;height:1.2px;background:#1b1a12"></div>
<div class="a" style="left:143.7px;top:186px;width:6.6px;height:6.4px;background:#1b1a12"></div>
<div class="a" style="left:170.9px;top:208.2px;width:5.8px;height:1.1px;background:#2b2a22"></div>
<div class="a" style="left:197.3px;top:225.8px;width:5.7px;height:5.6px;background:#1b1a12"></div>
<span class="t" style="left:85.20px;top:45.44px;font-size:30.20px;color:#1e1c14;-webkit-text-stroke:.3px #1e1c14;transform:scaleX(1.0363);">Click to edit Master title style</span>
<span class="t" style="left:108.40px;top:138.52px;font-size:13.80px;color:#1e1c14;transform:scaleX(1.0048);">Edit Master text styles</span>
<span class="t" style="left:138.90px;top:161.13px;font-size:13.20px;color:#1e1c14;font-style:italic;transform:scaleX(1.0435);">Second level</span>
<span class="t" style="left:166.20px;top:181.80px;font-size:12.40px;color:#1e1c14;transform:scaleX(0.9833);">Third level</span>
<span class="t" style="left:192.50px;top:203.00px;font-size:11.70px;color:#1e1c14;font-style:italic;transform:scaleX(1.0773);">Fourth level</span>
<span class="t" style="left:219.20px;top:222.52px;font-size:11.20px;color:#1e1c14;transform:scaleX(1.0026);">Fifth level</span>
<span class="t" style="left:86.40px;top:386.09px;font-size:8.40px;color:#1e1c14;transform:scaleX(1.1929);">12/10/16</span>
<span class="t" style="left:174.40px;top:386.09px;font-size:8.40px;color:#1e1c14;transform:scaleX(0.9745);">Footer</span>
<span class="t" style="left:631.50px;top:386.09px;font-size:8.40px;color:#1e1c14;transform:scaleX(1.0244);">‹#›</span>
<svg width="75" height="46" viewBox="0 0 75 46" style="left:323.4px;top:216.6px;opacity:.62">
<g fill="none" stroke="#a9b0b6" stroke-width="1">
<rect x="2.5" y="2.5" width="14" height="12" fill="#f7f6f3"/><path d="M2.5,6 h14 M2.5,9 h14 M2.5,12 h14 M7,6 v8.5 M11.5,6 v8.5"/>
</g>
<rect x="2.5" y="2.5" width="14" height="3" fill="#a9b0b6"/>
<rect x="30" y="7" width="3.6" height="8" fill="#9db3cf"/><rect x="34.6" y="3" width="3.6" height="12" fill="#d8c08a"/><rect x="39.2" y="5.5" width="3.6" height="9.5" fill="#9db3cf"/>
<path d="M56,3 h10 l4,4.5 h-10z" fill="#8fbfa5"/><rect x="60" y="8.5" width="12" height="7" fill="#f7f6f3" stroke="#a9b0b6"/>
<g fill="#f4f3f1" stroke="#b7bcc2" stroke-width="1">
<rect x="2.5" y="29.5" width="15" height="13"/><rect x="30" y="29.5" width="15" height="13"/><rect x="56.5" y="29.5" width="15" height="10"/>
</g>
<path d="M4,41 l4,-5 3,3 2,-2 3,4z" fill="#c3cfdb"/><circle cx="13" cy="33" r="1.2" fill="#e7c9a0"/>
<path d="M31.5,41 l4,-5 3,3 2,-2 3,4z" fill="#c3cfdb"/><circle cx="40.5" cy="33" r="1.2" fill="#e7c9a0"/>
<rect x="11" y="38" width="7.5" height="6" fill="#fff" stroke="#9aa9b8"/>
<circle cx="43" cy="41" r="3.6" fill="#bcd3ea" stroke="#9ab5d2"/>
<path d="M58,33 h12 M58,36 h12" stroke="#c9cdd2"/><circle cx="64" cy="42.5" r="3.2" fill="#bcd3ea" stroke="#9ab5d2"/>
</svg>
</div>
</div>
<!-- right scrollbar bits -->
<div class="a" style="left:946.8px;top:105.5px;width:5px;height:413px;background:#ebebec"></div>
<div class="a" style="left:946.8px;top:177.4px;width:5px;height:27.6px;background:#fff"></div>
<div class="a" style="left:946.8px;top:108.5px;width:5px;height:9px;background:#fbfbfb"></div>
<div class="a" style="left:946.8px;top:466.6px;width:5px;height:12px;background:#fbfbfb"></div>
<svg width="5" height="60" viewBox="946.8 105 5 60" style="left:946.8px;top:105px"><path d="M948,114.4 l2.6,-2.8 2.6,2.8z" fill="#666"/></svg>
<svg width="5" height="40" viewBox="946.8 465 5 40" style="left:946.8px;top:465px"><path d="M948.6,470.6 h3 l-1.5,2z M948.6,483 l1.6,1.6 1.6,-1.6 M948.6,485.6 l1.6,1.6 1.6,-1.6 M948.6,494.6 l1.6,1.6 1.6,-1.6 M948.6,497.2 l1.6,1.6 1.6,-1.6" fill="none" stroke="#555" stroke-width=".8"/></svg>

<!-- ============ STATUS BAR ============ -->
<div class="a" style="left:0;top:518.7px;width:951px;height:13px;background:#f0efef"></div>

<svg width="951" height="13" viewBox="0 518 951 13" style="left:0;top:518px">
<g fill="none" stroke="#6a6a6a" stroke-width=".9">
<rect x="52.6" y="522.4" width="4.6" height="7.4"/><path d="M57.2,523.4 h5.4 v6.4 h-5.4"/><path d="M58.4,526.2 l1.4,1.6 2.6,-3.6" stroke="#444"/>
<rect x="740.6" y="522" width="10" height="9" /><rect x="742.8" y="524.4" width="5.6" height="4.2"/><path d="M740.6,523.6 h10"/>
<rect x="761" y="522" width="4" height="3.6"/><rect x="766.6" y="522" width="4" height="3.6"/><rect x="761" y="527.2" width="4" height="3.6"/><rect x="766.6" y="527.2" width="4" height="3.6"/>
<path d="M780,522 v9 M783,522 v9 M786,522 v9 M789,522 v9 M779.6,522 h10"/>
<path d="M800,522 h10 M801.4,522.4 v5.2 h7.2 v-5.2 M805,527.6 v2.6 M802.6,531 h4.8"/>
</g>
<path d="M825.6,527 h76.6" stroke="#9a9a9a" stroke-width="1"/><path d="M863.8,524.6 v4.8" stroke="#9a9a9a" stroke-width=".9"/>
<rect x="852" y="522.2" width="2.6" height="9.6" fill="#3a3a3a"/>
<path d="M818.4,527 h4" stroke="#444" stroke-width="1.1"/><path d="M904.2,527 h5 M906.7,524.5 v5" stroke="#444" stroke-width="1.1"/>
<g fill="none" stroke="#555" stroke-width=".9"><rect x="938.4" y="522" width="9.4" height="9" stroke-dasharray="1.4,1"/><path d="M940.6,524.2 l5,4.8 M945.6,524.2 l-5,4.8"/></g>
</svg>


<span class="t" style="left:416.10px;top:2.07px;font-size:8.80px;color:#fbeee9;white-space:pre;transform:scaleX(1.0341);">33 - hoan thanh  -  PowerPoint</span>
<span class="t" style="left:776.50px;top:1.27px;font-size:8.80px;color:#fbeee9;transform:scaleX(1.0395);">Thanh Nguyen</span>
<span class="t" style="left:12.60px;top:26.18px;font-size:9.00px;color:#fbeee9;transform:scaleX(0.9231);">File</span>
<span class="t" style="left:53.80px;top:26.18px;font-size:9.00px;color:#b7472a;transform:scaleX(0.9934);">Slide Master</span>
<span class="t" style="left:124.50px;top:26.18px;font-size:9.00px;color:#fbeee9;transform:scaleX(1.0202);">Home</span>
<span class="t" style="left:170.20px;top:26.18px;font-size:9.00px;color:#fbeee9;transform:scaleX(0.9727);">Insert</span>
<span class="t" style="left:213.10px;top:26.18px;font-size:9.00px;color:#fbeee9;transform:scaleX(0.9705);">Transitions</span>
<span class="t" style="left:277.00px;top:26.18px;font-size:9.00px;color:#fbeee9;transform:scaleX(1.0128);">Animations</span>
<span class="t" style="left:343.00px;top:26.18px;font-size:9.00px;color:#fbeee9;transform:scaleX(0.9588);">Review</span>
<span class="t" style="left:392.10px;top:26.18px;font-size:9.00px;color:#fbeee9;transform:scaleX(1.0021);">View</span>
<span class="t" style="left:440.00px;top:26.58px;font-size:9.00px;color:#fbeee9;transform:scaleX(1.0319);">Tell me what you want to do</span>
<span class="t" style="left:899.60px;top:26.18px;font-size:9.00px;color:#fbeee9;transform:scaleX(0.9441);">Sh</span>
<span class="t" style="left:-2.50px;top:70.63px;font-size:8.90px;color:#3b3b3b;transform:scaleX(1.0426);">Insert Slide</span>
<span class="t" style="left:8.50px;top:82.63px;font-size:8.90px;color:#3b3b3b;transform:scaleX(1.0138);">Master</span>
<span class="t" style="left:48.60px;top:70.63px;font-size:8.90px;color:#3b3b3b;transform:scaleX(0.9863);">Insert</span>
<span class="t" style="left:46.30px;top:82.63px;font-size:8.90px;color:#3b3b3b;transform:scaleX(0.9866);">Layout</span>
<span class="t" style="left:88.20px;top:47.43px;font-size:8.90px;color:#a6a6a6;transform:scaleX(1.0173);">Delete</span>
<span class="t" style="left:88.20px;top:63.73px;font-size:8.90px;color:#3b3b3b;transform:scaleX(0.9599);">Rename</span>
<span class="t" style="left:88.20px;top:79.63px;font-size:8.90px;color:#a6a6a6;transform:scaleX(0.9461);">Preserve</span>
<span class="t" style="left:41.80px;top:97.24px;font-size:8.20px;color:#5a5a5a;transform:scaleX(0.9588);">Edit Master</span>
<span class="t" style="left:128.90px;top:70.63px;font-size:8.90px;color:#a6a6a6;transform:scaleX(1.0065);">Master</span>
<span class="t" style="left:128.90px;top:82.63px;font-size:8.90px;color:#a6a6a6;transform:scaleX(1.0091);">Layout</span>
<span class="t" style="left:173.70px;top:70.63px;font-size:8.90px;color:#3b3b3b;transform:scaleX(1.0044);">Insert</span>
<span class="t" style="left:158.30px;top:82.63px;font-size:8.90px;color:#3b3b3b;transform:scaleX(0.9963);">Placeholder</span>
<span class="t" style="left:226.00px;top:52.73px;font-size:8.90px;color:#3b3b3b;transform:scaleX(1.0342);">Title</span>
<span class="t" style="left:226.00px;top:74.73px;font-size:8.90px;color:#3b3b3b;transform:scaleX(0.9736);">Footers</span>
<span class="t" style="left:169.60px;top:97.24px;font-size:8.20px;color:#5a5a5a;transform:scaleX(0.9520);">Master Layout</span>
<span class="t" style="left:267.40px;top:71.03px;font-size:8.90px;color:#3b3b3b;transform:scaleX(0.9793);">Themes</span>
<span class="t" style="left:264.00px;top:97.24px;font-size:8.20px;color:#5a5a5a;transform:scaleX(0.9252);">Edit Theme</span>
<span class="t" style="left:320.70px;top:46.03px;font-size:8.90px;color:#3b3b3b;transform:scaleX(0.9588);">Colors</span>
<span class="t" style="left:320.70px;top:60.33px;font-size:8.90px;color:#3b3b3b;transform:scaleX(0.9503);">Fonts</span>
<span class="t" style="left:320.70px;top:75.03px;font-size:8.90px;color:#3b3b3b;transform:scaleX(0.9530);">Effects</span>
<span class="t" style="left:369.80px;top:46.03px;font-size:8.90px;color:#3b3b3b;transform:scaleX(0.9892);">Background Styles</span>
<span class="t" style="left:369.10px;top:60.33px;font-size:8.90px;color:#3b3b3b;transform:scaleX(0.9985);">Hide Background Graphics</span>
<span class="t" style="left:366.40px;top:97.24px;font-size:8.20px;color:#5a5a5a;transform:scaleX(0.9519);">Background</span>
<span class="t" style="left:487.80px;top:70.63px;font-size:8.90px;color:#3b3b3b;transform:scaleX(0.9823);">Slide</span>
<span class="t" style="left:486.40px;top:82.63px;font-size:8.90px;color:#3b3b3b;transform:scaleX(0.9325);">Size</span>
<span class="t" style="left:489.50px;top:97.24px;font-size:8.20px;color:#5a5a5a;transform:scaleX(0.9412);">Size</span>
<span class="t" style="left:529.50px;top:70.63px;font-size:8.90px;color:#3b3b3b;transform:scaleX(0.9690);">Close</span>
<span class="t" style="left:516.00px;top:82.63px;font-size:8.90px;color:#3b3b3b;transform:scaleX(1.0067);">Master View</span>
<span class="t" style="left:530.50px;top:97.24px;font-size:8.20px;color:#5a5a5a;transform:scaleX(0.9552);">Close</span>
<span class="t" style="left:0.50px;top:522.76px;font-size:8.60px;color:#3b3b3b;transform:scaleX(0.8898);">Slide Master</span>
<span class="t" style="left:69.00px;top:522.76px;font-size:8.60px;color:#3b3b3b;transform:scaleX(0.8818);">English (United States)</span>
<span class="t" style="left:917.40px;top:522.94px;font-size:8.20px;color:#3b3b3b;transform:scaleX(0.8663);">74%</span>
<span class="t" style="left:6.50px;top:118.38px;font-size:10.80px;color:#555;transform:scaleX(0.8312);">1</span>


<!-- unica watermark -->
<svg width="140" height="40" viewBox="795 15 140 40" style="left:795px;top:15px">
<g fill="none" stroke-width="5.6">
<path d="M805,28 v12.6 a6.7,6.7 0 0 0 13.4,0 v-12.6" stroke="#f0922b"/>
<g stroke="#1b74ba">
<path d="M834.7,50.6 v-12.9 a6.95,6.95 0 0 1 13.9,0 v12.9"/>
<path d="M863.1,28 v23"/>
<path d="M895.2,34.6 A10,8.85 0 1 0 895.2,44.7"/>
<ellipse cx="917" cy="39.65" rx="8.9" ry="8.85"/><path d="M925.9,28.2 v23"/>
</g></g>
<path d="M857.4,22.4 l5.7,-2.7 5.7,2.7 -5.7,2.7z" fill="#1b74ba"/><rect x="859.8" y="22.4" width="6.6" height="4.1" rx="2" fill="#1b74ba"/>
</svg>
<!-- round U badge -->
<div class="a" style="left:881.7px;top:458.9px;width:60.8px;height:60.1px;background:#f9f9f9"></div>
<div class="a" style="left:882px;top:459px;width:60.4px;height:59.8px;border-radius:50%;background:#3f90c5"></div>
<svg width="62" height="62" viewBox="881 458 62 62" style="left:881px;top:458px">
<path d="M900.5,478.2 V492.4 a10.3,10.3 0 0 0 20.6,0 V478.2" fill="none" stroke="#f5c842" stroke-width="6.9" stroke-linecap="round"/>
</svg>
</div></body></html>
